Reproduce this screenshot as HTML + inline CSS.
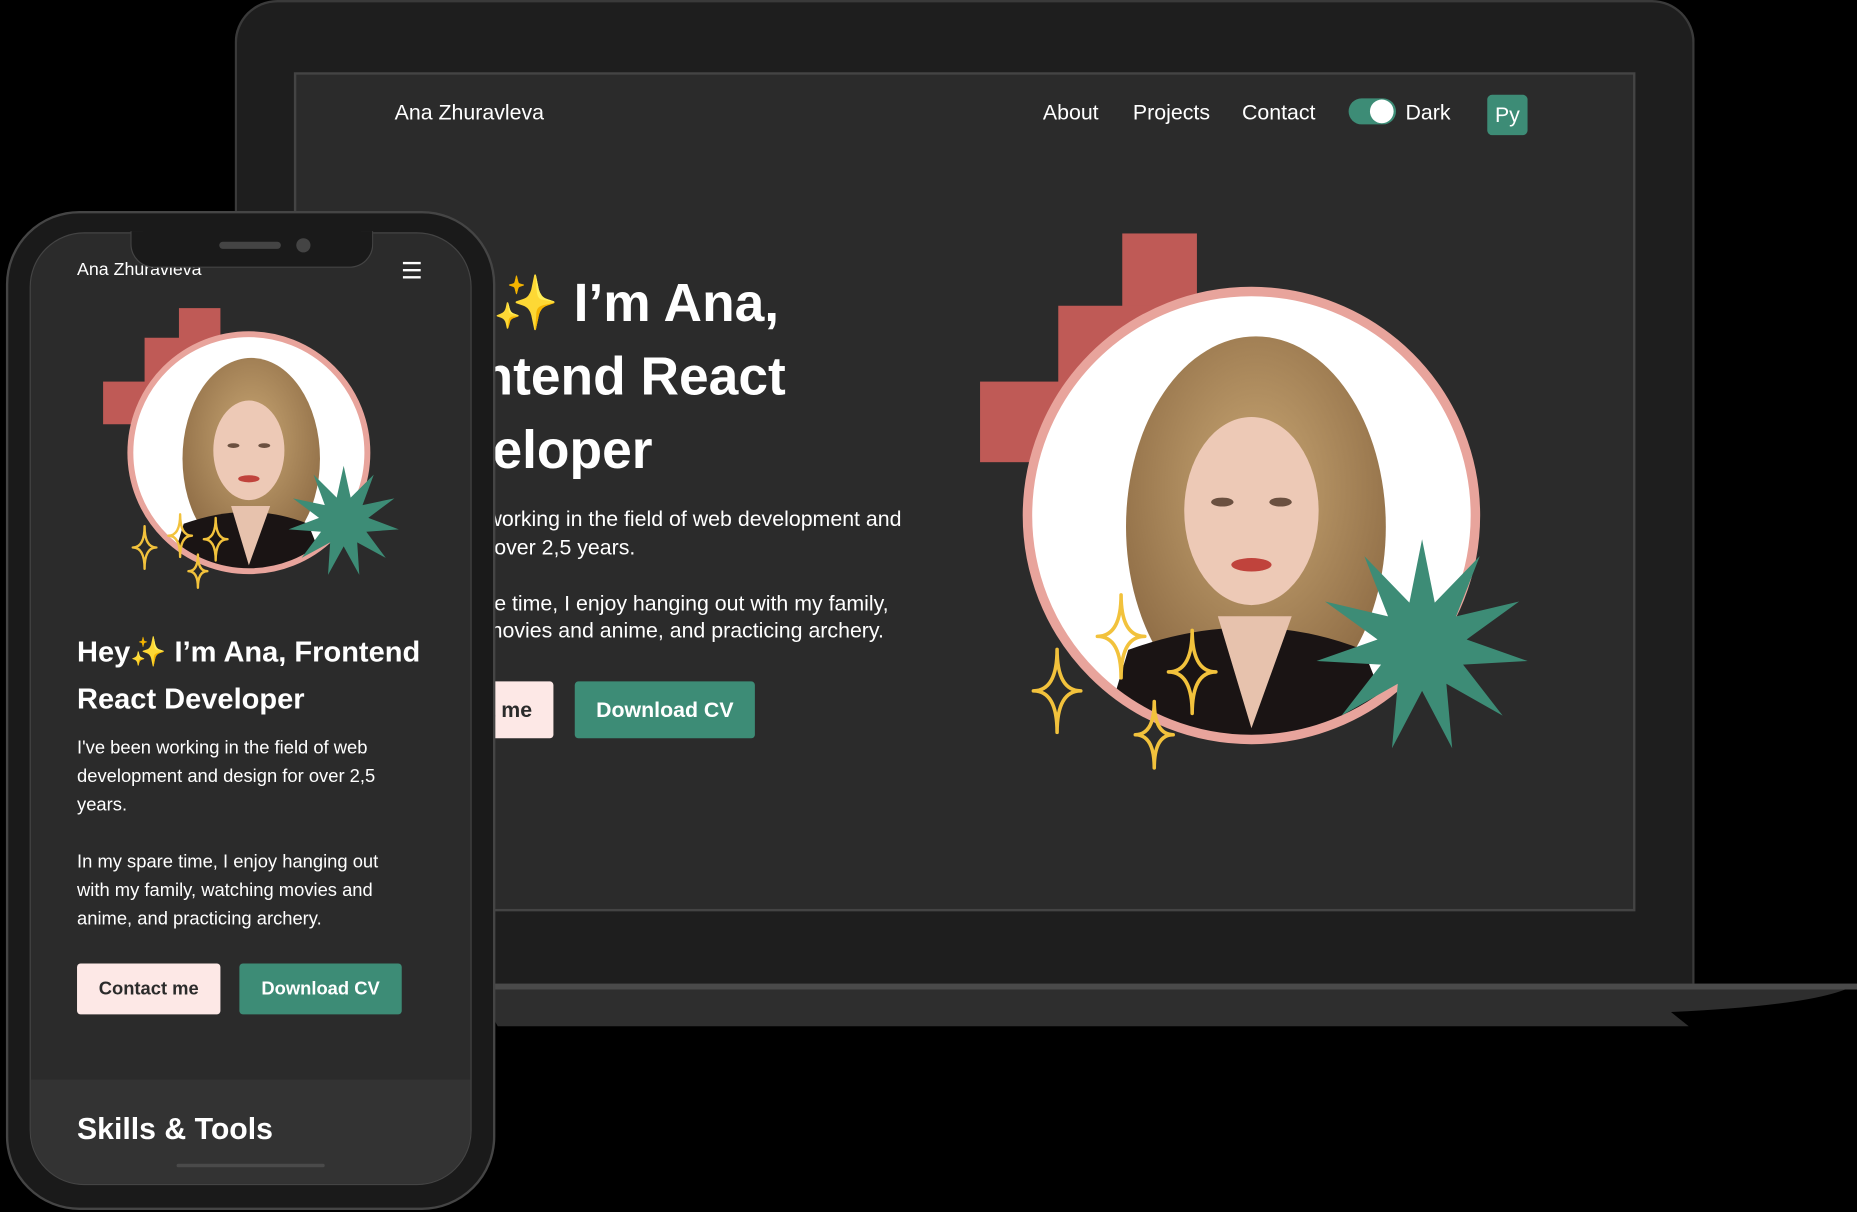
<!DOCTYPE html>
<html><head><meta charset="utf-8">
<style>
html,body{margin:0;padding:0;background:#000;width:1857px;height:1212px;overflow:hidden}
#s{position:absolute;left:0;top:0;width:1567px;height:1023px;transform:scale(1.18507);transform-origin:0 0;font-family:"Liberation Sans","DejaVu Sans",sans-serif;color:#fff}
.a{position:absolute}
.btn{position:absolute;font-weight:bold;display:flex;align-items:center;justify-content:center;border-radius:3px}
</style></head><body>
<div id="s">
<div class="a" style="left:198px;top:0;width:1232px;height:832px;background:#1e1e1e;border-radius:36px 36px 0 0;border:2px solid #3a3a3a;border-bottom:none;box-sizing:border-box"></div>
<svg class="a" style="left:400px;top:826px" width="1167" height="50"><path d="M0 4 H1167 Q1140 22 1010 28 L1025 40 H20 Z" fill="#2e2e2e"/><path d="M0 4 H1167 V9 H0Z" fill="#4a4a4a"/></svg>
<div class="a" style="left:248px;top:61px;width:1132px;height:708px;background:#2b2b2b;border:2px solid #444;box-sizing:border-box"></div>
<div class="a" style="left:333px;top:85px;font-size:18px">Ana Zhuravleva</div>
<div class="a" style="left:880px;top:85px;font-size:18px">About</div>
<div class="a" style="left:956px;top:85px;font-size:18px">Projects</div>
<div class="a" style="left:1048px;top:85px;font-size:18px">Contact</div>
<div class="a" style="left:1138px;top:83px;width:40px;height:22px;border-radius:11px;background:#3d8c76"></div>
<div class="a" style="left:1156px;top:84px;width:20px;height:20px;border-radius:10px;background:#fff"></div>
<div class="a" style="left:1186px;top:85px;font-size:18px">Dark</div>
<div class="a" style="left:1255px;top:80px;width:34px;height:34px;border-radius:4px;background:#3d8c76;font-size:18px;display:flex;align-items:center;justify-content:center">Py</div>
<div class="a" style="left:333px;top:225px;font-size:45px;font-weight:bold;line-height:62px;white-space:nowrap">Hey✨ I’m Ana,<br>Frontend React<br>Developer</div>
<div class="a" style="left:333px;top:427px;font-size:18px;line-height:23.5px;white-space:nowrap">I've been working in the field of web development and<br>design for over 2,5 years.<br><br>In my spare time, I enjoy hanging out with my family,<br>watching movies and anime, and practicing archery.</div>
<div class="btn" style="left:333px;top:575px;width:134px;height:48px;background:#fde8e6;color:#2b2b2b;font-size:18px">Contact me</div>
<div class="btn" style="left:485px;top:575px;width:152px;height:48px;background:#3d8c76;font-size:18px">Download CV</div>
<svg class="a" style="left:800px;top:180px" width="520" height="490" id="lh"></svg>
<div class="a" style="left:5px;top:178px;width:413px;height:843px;background:#1a1a1a;border-radius:62px;border:2px solid #454545;box-sizing:border-box"></div>
<div class="a" style="left:25px;top:196px;width:373px;height:804px;background:#2b2b2b;border-radius:46px;overflow:hidden;border:1px solid #444;box-sizing:border-box">
 <div class="a" style="left:0;top:714px;width:373px;height:100px;background:#333"></div>
</div>
<div class="a" style="left:65px;top:219px;font-size:15px">Ana Zhuravleva</div>
<div class="a" style="left:110px;top:195px;width:203px;height:30px;background:#1a1a1a;border-radius:0 0 20px 20px;border:1px solid #444;border-top:none"></div>
<div class="a" style="left:185px;top:204px;width:52px;height:6px;border-radius:3px;background:#444"></div>
<div class="a" style="left:250px;top:201px;width:12px;height:12px;border-radius:6px;background:#444"></div>
<div class="a" style="left:340px;top:221px;width:15px;height:2px;background:#fff;box-shadow:0 6px 0 #fff,0 12px 0 #fff"></div>
<svg class="a" style="left:80px;top:250px" width="270" height="250" id="ph"></svg>
<div class="a" style="left:65px;top:531px;font-size:24.5px;font-weight:bold;line-height:40px;white-space:nowrap">Hey✨ I’m Ana, Frontend<br>React Developer</div>
<div class="a" style="left:65px;top:620px;font-size:15.5px;line-height:24px;white-space:nowrap">I've been working in the field of web<br>development and design for over 2,5<br>years.<br><br>In my spare time, I enjoy hanging out<br>with my family, watching movies and<br>anime, and practicing archery.</div>
<div class="btn" style="left:65px;top:813px;width:121px;height:43px;background:#fde8e6;color:#2b2b2b;font-size:15.5px">Contact me</div>
<div class="btn" style="left:202px;top:813px;width:137px;height:43px;background:#3d8c76;font-size:15.5px">Download CV</div>
<div class="a" style="left:65px;top:939px;font-size:25.5px;font-weight:bold">Skills &amp; Tools</div>
<div class="a" style="left:149px;top:982px;width:125px;height:3px;border-radius:2px;background:#4a4a4a"></div>
</div>
<script>
function star(cx,cy,R,r,n){let p=[];for(let i=0;i<2*n;i++){let a=Math.PI*i/n-Math.PI/2,rr=i%2?r:R;p.push((cx+rr*Math.cos(a)).toFixed(1)+','+(cy+rr*Math.sin(a)).toFixed(1))}return '<polygon points="'+p.join(' ')+'" fill="#3d8c76"/>'}
function sp(x,y,w,h,sw){return `<path d="M${x} ${y-h} Q${x} ${y} ${x+w} ${y} Q${x} ${y} ${x} ${y+h} Q${x} ${y} ${x-w} ${y} Q${x} ${y} ${x} ${y-h}Z" fill="none" stroke="#f2c23c" stroke-width="${sw}" stroke-linejoin="round"/>`}
function hero(cx,cy,R,bw,rects,st,sps,sw,id){
 let s='';rects.forEach(r=>s+=`<rect x="${r[0]}" y="${r[1]}" width="${r[2]}" height="${r[3]}" fill="#bf5a56"/>`);
 s+=`<defs><clipPath id="c${id}"><circle cx="${cx}" cy="${cy}" r="${R}"/></clipPath><radialGradient id="h${id}" cx="0.5" cy="0.4" r="0.6"><stop offset="0" stop-color="#c9a774"/><stop offset="1" stop-color="#8e6c45"/></radialGradient></defs>`;
 s+=`<circle cx="${cx}" cy="${cy}" r="${R}" fill="#fff"/>`;
 let k=R/100;
 s+=`<g clip-path="url(#c${id})"><ellipse cx="${cx+2*k}" cy="${cy+5*k}" rx="${58*k}" ry="${85*k}" fill="url(#h${id})"/>`+
 `<path d="M${cx-70*k} ${cy+110*k} L${cx-55*k} ${cy+60*k} Q${cx} ${cy+40*k} ${cx+50*k} ${cy+60*k} L${cx+70*k} ${cy+110*k}Z" fill="#1a1414"/>`+
 `<path d="M${cx-15*k} ${cy+45*k} L${cx} ${cy+95*k} L${cx+18*k} ${cy+45*k}Z" fill="#e7c2ad"/>`+
 `<ellipse cx="${cx}" cy="${cy-2*k}" rx="${30*k}" ry="${42*k}" fill="#edc9b6"/>`+
 `<ellipse cx="${cx}" cy="${cy+22*k}" rx="${9*k}" ry="${3*k}" fill="#c0433c"/>`+
 `<ellipse cx="${cx-13*k}" cy="${cy-6*k}" rx="${5*k}" ry="${2*k}" fill="#6b5040"/><ellipse cx="${cx+13*k}" cy="${cy-6*k}" rx="${5*k}" ry="${2*k}" fill="#6b5040"/></g>`;
 s+=`<circle cx="${cx}" cy="${cy}" r="${R}" fill="none" stroke="#e8a49c" stroke-width="${bw}"/>`;
 s+=star(st[0],st[1],st[2],st[3],11);
 sps.forEach(p=>s+=sp(p[0],p[1],p[2],p[3],sw));
 document.getElementById(id).innerHTML=s;
}
hero(256,255,189,8,[[147,17,63,90],[93,78,117,70],[27,142,120,68]],[400,365,90,38],[[146,357,20,35],[206,387,20,35],[92,403,20,35],[174,440,16,28]],3,'lh');
hero(130,132,100,5,[[71,10,35,40],[42,35,64,40],[7,72,40,36]],[210,190,47,21],[[72,202,10,18],[102,205,10,18],[42,212,10,18],[87,232,8,14]],2,'ph');
</script>
</body></html>
